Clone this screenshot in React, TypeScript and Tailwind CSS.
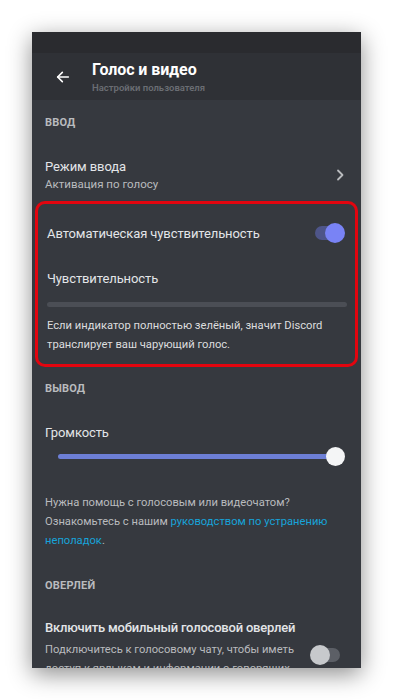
import React from 'react'

const font = { fontFamily: 'Roboto, "Noto Sans", sans-serif' }

function SectionLabel({ children, className = '' }: { children: React.ReactNode; className?: string }) {
  return (
    <div className={`flex items-center px-[13px] text-[11px] font-bold uppercase tracking-[0.2px] text-[#b9bbbe] ${className}`}>
      {children}
    </div>
  )
}

function Toggle({ on }: { on: boolean }) {
  return on ? (
    <div className="relative h-[14px] w-[28px] rounded-full bg-[#4e5589]">
      <div className="absolute right-[-2px] top-[-3px] h-[20px] w-[20px] rounded-full bg-[#7983f5]" />
    </div>
  ) : (
    <div className="relative h-[14px] w-[28px] rounded-full bg-[#5c5f66]">
      <div className="absolute left-[-2px] top-[-3px] h-[20px] w-[20px] rounded-full bg-[#c7c9cc]" />
    </div>
  )
}

export default function App() {
  return (
    <div className="h-[700px] w-[393px] overflow-hidden bg-white pl-[32px] pt-[32px]" style={font}>
      <div className="flex h-[636px] w-[329px] flex-col overflow-hidden bg-[#36393f] shadow-[0_6px_22px_rgba(0,0,0,0.45)]">
        {/* status bar */}
        <div className="h-[21px] shrink-0 bg-[#2a2b2f]" />

        {/* header */}
        <div className="flex h-[47px] shrink-0 items-center bg-[#2f3136]">
          <div className="flex w-[60px] justify-center pl-[2px]">
            <svg width="16" height="16" viewBox="0 0 24 24" fill="none" stroke="#ffffff" strokeWidth="2.4" strokeLinecap="round" strokeLinejoin="round">
              <path d="M20 12H4" />
              <path d="M11 5l-7 7 7 7" />
            </svg>
          </div>
          <div className="flex flex-col">
            <div className="text-[16px] font-bold leading-[22px] tracking-[-0.1px] text-white">Голос и видео</div>
            <div className="text-[9.5px] font-semibold leading-[13px] text-[#6a6d73]">Настройки пользователя</div>
          </div>
        </div>

        {/* content */}
        <div className="flex flex-col">
          <SectionLabel className="h-[45px] pt-[1px]">Ввод</SectionLabel>

          <div className="flex h-[55px] items-center justify-between pl-[13px] pr-[16px] pt-[4px]">
            <div className="flex flex-col">
              <div className="text-[13px] leading-[19px] tracking-[-0.1px] text-[#e3e5e8]">Режим ввода</div>
              <div className="text-[11.5px] leading-[16px] text-[#b9bbbe]">Активация по голосу</div>
            </div>
            <svg width="10" height="12" viewBox="0 0 10 12" fill="none" stroke="#b9bbbe" strokeWidth="1.8" strokeLinecap="round" strokeLinejoin="round">
              <path d="M3 1.5l4.5 4.5L3 10.5" />
            </svg>
          </div>

          {/* highlighted block */}
          <div className="ml-[3px] mt-[1px] flex h-[166px] w-[323px] flex-col rounded-[10px] border-[3px] border-[#e3050f] pl-[9px] pr-[9px]">
            <div className="flex h-[59px] items-center justify-between">
              <span className="text-[13px] tracking-[-0.1px] text-[#e3e5e8]">Автоматическая чувствительность</span>
              <div className="mr-[3px] mt-[-2px]">
                <Toggle on />
              </div>
            </div>
            <div className="flex h-[34px] items-center pb-[3px] text-[13px] tracking-[-0.1px] text-[#e3e5e8]">Чувствительность</div>
            <div className="mt-[5px] h-[5px] w-[300px] rounded-full bg-[#4b4e55]" />
            <div className="mt-[9px] text-[11.2px] leading-[19px] text-[#dcddde]">
              Если индикатор полностью зелёный, значит Discord транслирует ваш чарующий голос.
            </div>
          </div>

          <SectionLabel className="h-[42px] pt-[2px]">Вывод</SectionLabel>

          <div className="flex h-[40px] items-center px-[13px] pt-[8px] text-[13px] tracking-[-0.1px] text-[#e3e5e8]">Громкость</div>

          <div className="flex h-[14px] items-center pl-[26px] pr-[16px]">
            <div className="h-[5px] flex-1 rounded-full bg-[#6d7fd6]" />
            <div className="ml-[-9px] h-[19px] w-[19px] shrink-0 rounded-full bg-[#f4f5f6]" />
          </div>

          <div className="mt-[30px] px-[13px] text-[11.2px] leading-[19px] text-[#b9bbbe]">
            Нужна помощь с голосовым или видеочатом? Ознакомьтесь с нашим{' '}
            <span className="text-[#17a3d9]">руководством по устранению неполадок</span>.
          </div>

          <SectionLabel className="h-[56px] pt-[16px]">Оверлей</SectionLabel>

          <div className="flex items-start justify-between pl-[13px] pr-[21px] pt-[12px]">
            <div className="flex flex-col">
              <div className="whitespace-nowrap text-[13px] font-medium leading-[20px] tracking-[-0.2px] text-[#e3e5e8]">Включить мобильный голосовой оверлей</div>
              <div className="mt-[2px] w-[250px] text-[11.2px] leading-[19px] text-[#b9bbbe]">
                Подключитесь к голосовому чату, чтобы иметь доступ к ярлыкам и информации о говорящих
              </div>
            </div>
            <div className="mt-[30px] shrink-0">
              <Toggle on={false} />
            </div>
          </div>
        </div>
      </div>
    </div>
  )
}
